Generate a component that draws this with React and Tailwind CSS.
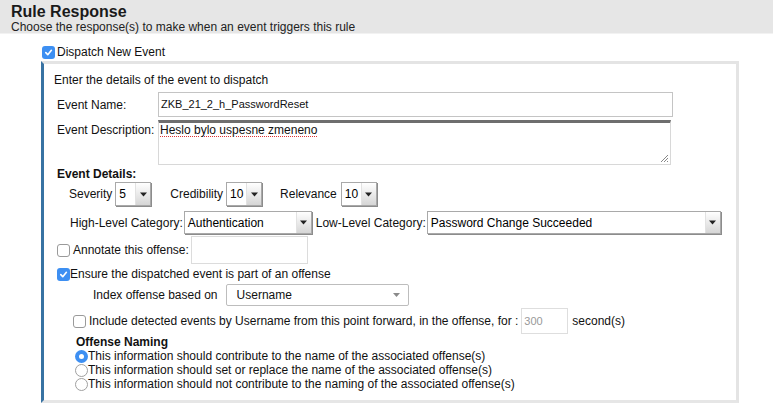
import React from 'react';

const CheckBox = ({ checked }) => (
  checked ? (
    <span className="inline-flex items-center justify-center w-[13px] h-[13px] rounded-[3px] bg-[#3d8ff2] shrink-0">
      <svg width="9" height="9" viewBox="0 0 10 10">
        <path d="M2 5.2 L4.2 7.4 L8.2 2.6" stroke="white" strokeWidth="1.8" fill="none" strokeLinecap="round" strokeLinejoin="round" />
      </svg>
    </span>
  ) : (
    <span className="inline-block w-[13px] h-[13px] rounded-[3px] border border-[#9a9a9a] bg-white shrink-0" />
  )
);

const Radio = ({ checked }) => (
  checked ? (
    <span className="inline-flex items-center justify-center w-[13px] h-[13px] rounded-full bg-[#3d8ff2] shrink-0">
      <span className="w-[5px] h-[5px] rounded-full bg-white" />
    </span>
  ) : (
    <span className="inline-block w-[13px] h-[13px] rounded-full border border-[#a0a0a0] bg-white shrink-0" />
  )
);

// old style select with gradient arrow button
const OldSelect = ({ value, width, height = 24 }) => (
  <div
    className="flex items-stretch border border-[#a9a9a9] bg-white shadow-[1px_1px_0_#8c8c8c]"
    style={{ width, height }}
  >
    <div className="flex-1 flex items-center pl-[3px] text-[12px] text-black overflow-hidden whitespace-nowrap">{value}</div>
    <div className="w-[15px] flex items-center justify-center bg-gradient-to-b from-[#ffffff] to-[#d6d6d6] border-l border-[#e2e2e2]">
      <svg width="7" height="5" viewBox="0 0 7 5"><path d="M0 0.5 L7 0.5 L3.5 4.5 Z" fill="#222" /></svg>
    </div>
  </div>
);

const App = () => {
  return (
    <div className="w-[775px] h-[408px] bg-white text-[12px] text-[#111] overflow-hidden" style={{ fontFamily: '"Liberation Sans", Arial, Helvetica, sans-serif' }}>
      <div className="w-[773px] h-[34px] bg-[#e6e6e6] pl-[11px] border-b border-[#f2f2f2]">
        <div className="text-[16px] font-bold leading-[19px] pt-[2px] text-[#1a1a1a]">Rule Response</div>
        <div className="text-[12px] leading-[13px] text-[#222]">Choose the response(s) to make when an event triggers this rule</div>
      </div>

      <div className="flex items-center gap-[2px] pl-[42px] mt-[11px] h-[14px]">
        <CheckBox checked />
        <span className="leading-[14px]">Dispatch New Event</span>
      </div>

      <div className="ml-[41px] mt-[2px] w-[698px] h-[342px] border-l-[3px] border-l-[#3873a3] border-t-[3px] border-t-[#e4e4e4] border-r-[3px] border-r-[#e4e4e4] border-b-[3px] border-b-[#e6e6e6]">
        <div className="pl-[10px] pt-[9px] leading-[14px]">Enter the details of the event to dispatch</div>

        <div className="flex items-center mt-[5px] h-[25px]">
          <div className="w-[114px] pl-[13px]">Event Name:</div>
          <div className="w-[515px] h-[25px] border border-[#c4c4c4] flex items-center pl-[2px] text-[11px]">ZKB_21_2_h_PasswordReset</div>
        </div>

        <div className="flex items-start mt-[3px] h-[45px]">
          <div className="w-[114px] pl-[13px] pt-[1px]">Event Description:</div>
          <div className="relative w-[513px] h-[45px] border border-[#d8d8d8] border-t-[3px] border-t-[#6e6e6e] pl-[1px] text-[12px] leading-[14px]">
            <span className="underline decoration-dotted decoration-[#d33] underline-offset-2">Heslo bylo uspesne zmeneno</span>
            <svg className="absolute right-[1px] bottom-[1px]" width="9" height="9" viewBox="0 0 9 9">
              <path d="M8 1 L1 8 M8 4 L4 8 M8 7 L7 8" stroke="#888" strokeWidth="1" />
            </svg>
          </div>
        </div>

        <div className="pl-[13px] mt-[2px] font-bold leading-[14px]">Event Details:</div>

        <div className="flex items-center mt-[1px] h-[24px] pl-[25px]">
          <span className="mr-[3px]">Severity</span>
          <OldSelect value="5" width={36} />
          <span className="ml-[19px] mr-[3px]">Credibility</span>
          <OldSelect value="10" width={36} />
          <span className="ml-[18px] mr-[4px]">Relevance</span>
          <OldSelect value="10" width={36} />
        </div>

        <div className="flex items-center mt-[5px] h-[23px] pl-[26px]">
          <span className="mr-[1px]">High-Level Category:</span>
          <OldSelect value="Authentication" width={128} height={23} />
          <span className="ml-[4px] mr-[1px]">Low-Level Category:</span>
          <OldSelect value="Password Change Succeeded" width={294} height={23} />
        </div>

        <div className="flex items-center mt-[2px] h-[28px] pl-[13px]">
          <CheckBox />
          <span className="ml-[3px] mr-[2px]">Annotate this offense:</span>
          <div className="w-[117px] h-[28px] border border-[#dcdcdc]" />
        </div>

        <div className="flex items-center mt-[3px] h-[14px] pl-[13px]">
          <CheckBox checked />
          <span className="leading-[14px]">Ensure the dispatched event is part of an offense</span>
        </div>

        <div className="flex items-center mt-[3px] h-[22px] pl-[49px]">
          <span className="mr-[8px]">Index offense based on</span>
          <div className="w-[183px] h-[22px] border border-[#bdbdbd] rounded-[2px] flex items-center justify-between pl-[10px] pr-[8px] text-[12px]">
            <span>Username</span>
            <svg width="7" height="4" viewBox="0 0 7 4"><path d="M0 0 L7 0 L3.5 4 Z" fill="#8a8a8a" /></svg>
          </div>
        </div>

        <div className="flex items-center mt-[2px] h-[26px] pl-[29px]">
          <CheckBox />
          <span className="ml-[3px]">Include detected events by Username from this point forward, in the offense, for :</span>
          <div className="ml-[3px] w-[47px] h-[26px] border border-[#dedede] flex items-center pl-[2px] text-[11px] text-[#999]">300</div>
          <span className="ml-[4px]">second(s)</span>
        </div>

        <div className="pl-[32px] mt-[1px] font-bold leading-[14px]">Offense Naming</div>
        <div className="pl-[31px] leading-[14px]">
          <div className="flex items-center"><Radio checked /><span>This information should contribute to the name of the associated offense(s)</span></div>
          <div className="flex items-center"><Radio /><span>This information should set or replace the name of the associated offense(s)</span></div>
          <div className="flex items-center"><Radio /><span>This information should not contribute to the naming of the associated offense(s)</span></div>
        </div>
      </div>
    </div>
  );
};

export default App;
